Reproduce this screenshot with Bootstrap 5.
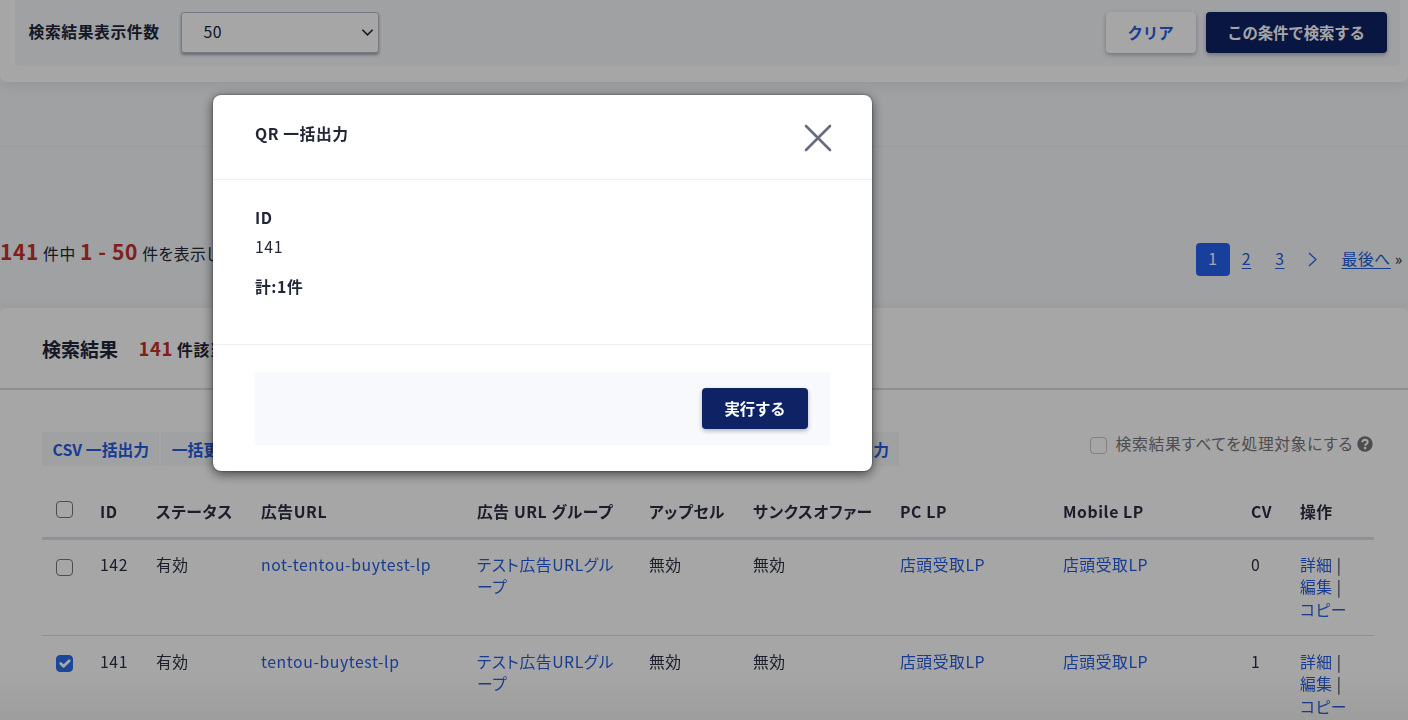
<!DOCTYPE html>
<html lang="ja">
<head>
<meta charset="utf-8">
<meta name="viewport" content="width=device-width, initial-scale=1">
<title>広告URL 検索結果</title>
<link rel="stylesheet" href="https://cdn.jsdelivr.net/npm/bootstrap@5.3.0/dist/css/bootstrap.min.css">
<style>
:root{--link:#265edd;--navy:#0f2364;--ink:#222738}
body{font-family:"Noto Sans CJK JP",sans-serif;font-size:15.8px;line-height:22.6px;letter-spacing:.57px;font-feature-settings:"palt";color:var(--ink);background:#f5f7fa;height:720px;overflow:hidden}
a{color:var(--link);text-decoration:none}
.fw-b{font-weight:700}
.search-panel{height:82px;background:#fff;border-radius:0 0 6px 6px;padding:0 8.5px 16px 15px;box-shadow:0 3px 12px rgba(40,70,50,.09)}
.search-bar{height:66px;background:#f5f7fa;border-radius:0 0 4px 4px;padding:0 13px 1.5px 13.6px}
.search-bar .fw-b{padding-top:1px}
.count-select{width:198px;height:41px;border:1px solid #b4bccd;border-radius:3px;background:#fff;box-shadow:0 2px 3px rgba(30,40,60,.4);padding:1px 4px 0 21.5px;margin-left:21.5px}
.act{height:41px;border:0;border-radius:4px;font-size:15.4px;font-weight:700;letter-spacing:-.1px;padding:0;box-shadow:0 2px 4px rgba(20,20,60,.3)}
.act-light,.act-light:hover{background:#fff;color:var(--link);width:90px}
.act-navy,.act-navy:hover{background:var(--navy);color:#fff;width:181px}
.act-search{margin-left:10px}
.spacer-strip{height:65px;border-bottom:1px solid #eceef2}
.count-row{height:161px;padding-top:93px}
.num{color:#c8302a;font-weight:700;font-size:21px;letter-spacing:.55px}
.count-text{word-spacing:.1px}
.pager{padding-right:5px;margin-top:3px}
.pager .cur{background:#2762f0;color:#fff;border-radius:4px;width:34px;height:33px}
.pager a{text-decoration:underline;text-underline-offset:3px;text-decoration-thickness:1.3px}
.pager a+a{margin-left:24px}
.pager .page-two{margin-left:12px}
.pager .page-last{margin-left:24.5px}
.pager svg{margin-left:23.5px}
.result{background:#fff;border-radius:6px 6px 0 0;height:430px;box-shadow:0 -2px 8px rgba(40,70,50,.06)}
.result-head{height:82px;border-bottom:2px solid #dcdde0;padding:3px 42px 0;font-weight:700}
.result-title{font-size:19px;letter-spacing:0}
.hits{margin-left:20.5px;white-space:nowrap}
.hits .num{font-size:18.5px}
.tools{padding:42px 35px 0 42px;height:93px}
.tool{height:34px;background:#f5f7fa;color:var(--link);font-weight:700;padding:2px 10px 0 10.5px;letter-spacing:.05px}
.tool+.tool{margin-left:2px}
.tools .last-tool{margin-left:543.5px}
.pick-all{color:#777;height:24px}
.pick-label{margin:0 4px 0 9px;letter-spacing:.65px}
.list{width:1332px;margin-left:42px;table-layout:fixed;--bs-table-bg:transparent;color:#2b3042;will-change:transform}
.list>:not(caption)>*>*{padding:0 0 0 12px;border:0;white-space:nowrap;color:inherit}
.list thead th{height:55px;font-weight:700;border-bottom:3px solid #dedfe7;padding-top:5px;vertical-align:middle}
.list tbody td{height:97px;padding-top:14px;border-bottom:1px solid #dddde0}
.list tbody tr+tr td{padding-top:15px}
.list>:not(caption)>*>:first-child{padding-left:14px}
.box{width:17px;height:17px;border:1.5px solid #777;border-radius:3px;background-color:transparent;margin:0;float:none;display:block}
.box:checked{background-color:#2a6ded;border-color:#2a6ded;background-size:19px}
.box.soft{border-color:#c6c6c6;margin-top:3px}
.box.headbox{margin-top:-6px}
.box.rowbox{margin-top:5px}
tr+tr .box.rowbox{margin-top:4.5px}
.shade{position:fixed;inset:0;background:linear-gradient(transparent 670px,rgba(0,0,0,.05) 720px),rgba(0,0,0,.35);z-index:1040}
.qr-dialog{width:659.5px;max-width:none;margin:95px 0 0 212.5px}
.qr-box{height:376px;border:0;border-radius:8px;box-shadow:0 3px 12px rgba(0,0,0,.6),0 0 2px rgba(0,0,0,.6);color:var(--ink)}
.qr-head{height:85px;border-bottom:1px solid #eff0f6;padding:27.5px 40.5px 0 42.5px}
.qr-head svg{margin-top:1.5px}
.qr-body{height:165px;border-bottom:1px solid #eff0f6;padding:27px 42.5px 0}
.qr-id{margin:6.5px 0 17px}
.run-bar{margin:27px 42px 0;height:73px;background:#f7f9fc;padding-right:22px}
.run-bar .act-navy{width:106px}
</style>
</head>
<body>
<section class="search-panel">
  <div class="search-bar d-flex align-items-center">
    <span class="fw-b">検索結果表示件数</span>
    <div class="count-select d-flex align-items-center justify-content-between"><span>50</span>
      <svg width="13" height="9" viewBox="0 0 14 9" fill="none" stroke="#222738" stroke-width="1.7"><path d="M1.5 1.5 7 7l5.5-5.5"/></svg></div>
    <button class="btn act act-light ms-auto">クリア</button>
    <button class="btn act act-navy act-search">この条件で検索する</button>
  </div>
</section>
<div class="spacer-strip"></div>
<div class="count-row d-flex justify-content-between align-items-start">
  <div class="count-text"><span class="num">141</span> 件中 <span class="num">1 - 50</span> 件を表示しま</div>
  <nav class="pager d-flex align-items-center">
    <span class="cur d-flex align-items-center justify-content-center">1</span>
    <a class="page-two" href="#">2</a><a href="#">3</a>
    <svg width="9" height="15" viewBox="0 0 9 15" fill="none" stroke="#265edd" stroke-width="1.2"><path d="M1 1l7 6.5L1 14"/></svg>
    <a class="page-last" href="#">最後へ</a><span class="ms-1">»</span>
  </nav>
</div>
<section class="result">
  <div class="result-head d-flex align-items-center"><span class="result-title">検索結果</span><span class="hits"><span class="num">141</span> 件該当</span></div>
  <div class="tools d-flex align-items-start">
    <span class="tool d-flex align-items-center">CSV 一括出力</span>
    <span class="tool d-flex align-items-center">一括更新</span>
    <span class="tool d-flex align-items-center last-tool">QR 一括出力</span>
    <label class="pick-all d-flex ms-auto align-items-center">
      <input class="form-check-input box soft" type="checkbox"><span class="pick-label">検索結果すべてを処理対象にする</span>
      <svg width="16" height="16" viewBox="0 0 16 16"><circle cx="8" cy="8" r="7.7" fill="#777"/><path d="M5.3 6.3C5.3 2.8 10.9 3 10.7 6.2 10.5 8 8.2 7.9 8.2 9.7" fill="none" stroke="#fff" stroke-width="2"/><circle cx="8.1" cy="12.1" r="1.3" fill="#fff"/></svg>
    </label>
  </div>
  <table class="table list mb-0">
    <colgroup><col style="width:46px"><col style="width:56px"><col style="width:105px"><col style="width:216px"><col style="width:172px"><col style="width:104px"><col style="width:147px"><col style="width:163px"><col style="width:188px"><col style="width:49px"><col style="width:86px"></colgroup>
    <thead><tr><th><input class="form-check-input box headbox" type="checkbox"></th><th>ID</th><th>ステータス</th><th>広告URL</th><th>広告 URL グループ</th><th>アップセル</th><th>サンクスオファー</th><th>PC LP</th><th>Mobile LP</th><th>CV</th><th>操作</th></tr></thead>
    <tbody>
      <tr><td><input class="form-check-input box rowbox" type="checkbox"></td><td>142</td><td>有効</td><td><a href="#">not-tentou-buytest-lp</a></td><td><a href="#">テスト広告URLグル<br>ープ</a></td><td>無効</td><td>無効</td><td><a href="#">店頭受取LP</a></td><td><a href="#">店頭受取LP</a></td><td>0</td><td><a href="#">詳細</a> |<br><a href="#">編集</a> |<br><a href="#">コピー</a></td></tr>
      <tr><td><input class="form-check-input box rowbox" type="checkbox" checked></td><td>141</td><td>有効</td><td><a href="#">tentou-buytest-lp</a></td><td><a href="#">テスト広告URLグル<br>ープ</a></td><td>無効</td><td>無効</td><td><a href="#">店頭受取LP</a></td><td><a href="#">店頭受取LP</a></td><td>1</td><td><a href="#">詳細</a> |<br><a href="#">編集</a> |<br><a href="#">コピー</a></td></tr>
    </tbody>
  </table>
</section>
<div class="shade"></div>
<div class="modal d-block" tabindex="-1">
  <div class="modal-dialog qr-dialog">
    <div class="modal-content qr-box">
      <div class="qr-head d-flex justify-content-between align-items-start fw-b"><span>QR 一括出力</span>
        <svg width="28" height="28" viewBox="0 0 28 28" stroke="#666b82" stroke-width="2.6" stroke-linecap="round"><path d="M2 2l24 24M26 2L2 26"/></svg></div>
      <div class="qr-body"><div class="fw-b">ID</div><div class="qr-id">141</div><div class="fw-b">計:1件</div></div>
      <div class="run-bar d-flex align-items-center justify-content-end"><button class="btn act act-navy">実行する</button></div>
    </div>
  </div>
</div>
<script src="https://cdn.jsdelivr.net/npm/bootstrap@5.3.0/dist/js/bootstrap.bundle.min.js"></script>
</body>
</html>
